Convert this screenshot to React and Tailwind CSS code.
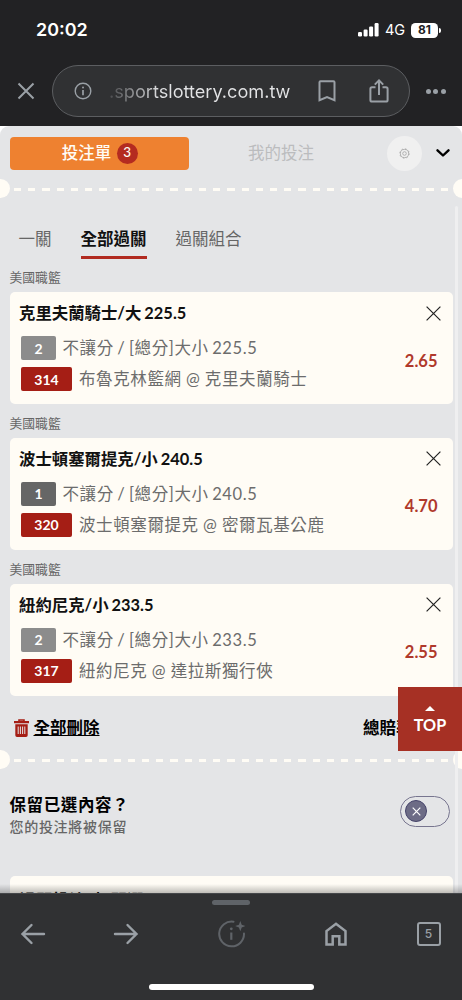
import React, { useState } from 'react';

const initialBets = [
  { id: 314, pick: '克里夫蘭騎士/大 225.5', side: 2, market: '不讓分 / [總分]大小 225.5', match: '布魯克林籃網 @ 克里夫蘭騎士', odds: '2.65' },
  { id: 320, pick: '波士頓塞爾提克/小 240.5', side: 1, market: '不讓分 / [總分]大小 240.5', match: '波士頓塞爾提克 @ 密爾瓦基公鹿', odds: '4.70' },
  { id: 317, pick: '紐約尼克/小 233.5', side: 2, market: '不讓分 / [總分]大小 233.5', match: '紐約尼克 @ 達拉斯獨行俠', odds: '2.55' },
];

const StatusBar = () => (
  <div className="flex h-[65px] items-start justify-between pl-9 pr-[21px] pt-[18px] text-white">
    <span className="h-6 text-[17.9px] font-semibold leading-6">20:02</span>
    <div className="flex h-6 items-center">
      <svg className="h-[14px] w-[21px]" viewBox="0 0 21 14" fill="currentColor">
        <rect x="0" y="9" width="4" height="4.5" rx="1.2" />
        <rect x="5.6" y="6.5" width="4" height="7" rx="1.2" />
        <rect x="11.1" y="3.5" width="4" height="10" rx="1.2" />
        <rect x="16.6" y="0" width="4" height="13.5" rx="1.2" />
      </svg>
      <span className="ml-[6px] w-[26px] whitespace-nowrap text-[14.5px] leading-6">4G</span>
      <span className="flex h-[15px] w-[27px] items-center justify-center rounded-[4.5px] bg-white text-[12px] font-bold leading-none text-[#222224]">81</span>
      <span className="ml-px h-[5px] w-[2px] rounded-r-full bg-white" />
    </div>
  </div>
);

const AddressBar = () => (
  <div className="flex h-[52px] items-center pl-[17px] text-[#9aa0a6]">
    <svg className="h-[18px] w-[18px]" viewBox="0 0 18 18" fill="none" stroke="currentColor" strokeWidth="2">
      <path d="M1.5 1.5l15 15M16.5 1.5l-15 15" />
    </svg>
    <div className="ml-[17px] flex h-[52px] w-[358px] items-center rounded-full border border-[#5c5e61] bg-[#303133]">
      <svg className="ml-[21px] h-[18px] w-[18px]" viewBox="0 0 18 18" fill="none" stroke="currentColor" strokeWidth="1.4">
        <circle cx="9" cy="9" r="7.8" />
        <path d="M9 8v5.2" strokeWidth="1.7" />
        <circle cx="9" cy="5.6" r="1" fill="currentColor" stroke="none" />
      </svg>
      <span className="ml-[17px] w-[183px] whitespace-nowrap bg-gradient-to-r from-[#4a4b4e] via-[#e3e4e6] via-[28%] to-[#e3e4e6] bg-clip-text text-[18.15px] leading-7 text-transparent">
        .sportslottery.com.tw
      </span>
      <svg className="ml-[26px] h-[22px] w-[18px]" viewBox="0 0 18 22" fill="none" stroke="currentColor" strokeWidth="2">
        <path d="M1.5 2.3q0-1 1-1h13q1 0 1 1v17.9L9 17l-7.5 3.2z" />
      </svg>
      <svg className="ml-[33px] h-6 w-5" viewBox="0 0 20 24" fill="none" stroke="currentColor" strokeWidth="2">
        <path d="M6.5 8.3H3q-1.6 0-1.6 1.6v11q0 1.6 1.6 1.6h14q1.6 0 1.6-1.6v-11q0-1.6-1.6-1.6h-3.5M10 16V2M5.8 5.6L10 1.4l4.2 4.2" />
      </svg>
    </div>
    <div className="ml-[16px] flex gap-[2.3px]">
      <span className="h-[5px] w-[5px] rounded-full bg-current" />
      <span className="h-[5px] w-[5px] rounded-full bg-current" />
      <span className="h-[5px] w-[5px] rounded-full bg-current" />
    </div>
  </div>
);

// Perforated ticket edge
const TicketDivider = () => (
  <div className="flex h-[19px] shrink-0 items-center overflow-hidden">
    <span className="-ml-[9.5px] h-[19px] w-[19px] shrink-0 rounded-full bg-[#fffcf5]" />
    <span className="ml-[4.5px] mt-[2px] h-[2.4px] flex-1 bg-[repeating-linear-gradient(90deg,#fffcf5_0_7.2px,transparent_7.2px_14.22px)]" />
    <span className="-mr-[9.5px] ml-[4px] h-[19px] w-[19px] shrink-0 rounded-full bg-[#fffcf5]" />
  </div>
);

const BetCard = ({ bet, onRemove }) => (
  <div className="h-[145.9px] shrink-0">
    <div className="flex h-[33.5px] items-center pt-[5px] text-[12.8px] leading-none text-[#666]">美國職籃</div>
    <div className="h-[112.4px] rounded-[5px] bg-[#fffcf5] pl-[9.5px] pr-[12px] pt-[9px]">
      <div className="flex h-[24px] items-center justify-between">
        <span className="whitespace-nowrap text-[16.4px] font-bold leading-6 text-[#111] [word-spacing:-1px]">{bet.pick}</span>
        <button onClick={() => onRemove(bet.id)}>
          <svg className="h-[15px] w-[15px]" viewBox="0 0 15 15" fill="none" stroke="#222" strokeWidth="1.2">
            <path d="M.6.6l13.8 13.8M14.4.6L.6 14.4" />
          </svg>
        </button>
      </div>
      <div className="flex items-center justify-between pt-[11px]">
        <div className="flex flex-col gap-[7px] pl-[2px] text-[16.5px] tracking-[0.6px] text-[#6c6c6c]">
          <div className="flex h-6 items-center">
            <span className={`flex h-6 w-[35px] items-center justify-center rounded-[2px] text-[14px] font-bold tracking-normal text-white ${bet.side === 1 ? 'bg-[#666]' : 'bg-[#8c8c8c]'}`}>{bet.side}</span>
            <span className="ml-[6.5px] whitespace-nowrap leading-6 [word-spacing:-1.3px]">{bet.market}</span>
          </div>
          <div className="flex h-6 items-center">
            <span className="flex h-6 w-[51px] items-center justify-center rounded-[2px] bg-[#a51e15] text-[14px] font-bold tracking-normal text-white">{bet.id}</span>
            <span className="ml-[7px] whitespace-nowrap leading-6 [word-spacing:-0.4px]">{bet.match}</span>
          </div>
        </div>
        <span className="mr-[3px] pb-[6px] text-[16.5px] font-bold leading-6 text-[#b0392b]">{bet.odds}</span>
      </div>
    </div>
  </div>
);

const SlipHeader = ({ count }) => (
  <div className="flex h-[53px] shrink-0 items-center pl-[9.5px] pt-[1px]">
    <div className="flex h-[33px] w-[179.5px] items-center justify-center rounded-[4px] bg-[#ee8130] pl-[1px] text-[16.5px] text-[#fffcf5]">
      <span className="font-medium">投注單</span>
      <span className="ml-[5.5px] flex h-[21px] w-[21px] items-center justify-center rounded-full bg-[#b42b20] text-[13.5px] font-medium leading-none">{count}</span>
    </div>
    <span className="ml-[59px] w-[70px] whitespace-nowrap text-[16.5px] text-[#bbbcbe]">我的投注</span>
    <span className="ml-[69px] flex h-[35px] w-[35px] items-center justify-center rounded-full bg-[#f0f0f0]">
      <svg className="h-[11px] w-[11px]" viewBox="0 0 11 11" fill="none" stroke="#aaa" strokeWidth=".9">
        <circle cx="5.5" cy="5.5" r="4.1" />
        <circle cx="5.5" cy="5.5" r="4.7" strokeDasharray="1.5 2.19" />
        <circle cx="5.5" cy="5.5" r="1.8" />
      </svg>
    </span>
    <svg className="ml-[14px] h-[10px] w-[14px]" viewBox="0 0 14 10" fill="none" stroke="#000" strokeWidth="2.4" strokeLinecap="round" strokeLinejoin="round">
      <path d="M1.5 2.3L7 7.5l5.5-5.2" />
    </svg>
  </div>
);

const BottomBar = () => (
  <div className="flex h-[107px] shrink-0 flex-col items-center border-t border-[#45474a] bg-[#303133] text-[#9aa0a6]">
    <span className="mt-[6px] h-[5px] w-[38px] rounded-full bg-[#5f6368]" />
    <div className="mt-[12px] flex h-[34px] w-full items-center pl-[20px]">
      <svg className="h-[22px] w-[26px]" viewBox="0 0 26 22" fill="none" stroke="currentColor" strokeWidth="2.4" strokeLinecap="round">
        <path d="M24 11H2.5M11.5 2L2.5 11l9 9" />
      </svg>
      <svg className="ml-[67px] h-[22px] w-[26px]" viewBox="0 0 26 22" fill="none" stroke="currentColor" strokeWidth="2.4" strokeLinecap="round">
        <path d="M2 11h21.5M14.5 2l9 9-9 9" />
      </svg>
      <svg className="ml-[79px] h-[28px] w-[28px]" viewBox="0 0 28 28" fill="none" stroke="#5f6368" strokeWidth="2">
        <path d="M15.5 1.7A12.4 12.4 0 1 0 26 13.5" strokeLinecap="round" />
        <path d="M13.3 12.5v7.3" strokeWidth="2.2" />
        <circle cx="13.3" cy="8.8" r="1.4" fill="#5f6368" stroke="none" />
        <path d="M22.3 1l1.4 3.7 3.7 1.4-3.7 1.4-1.4 3.7-1.4-3.7-3.7-1.4 3.7-1.4z" fill="#5f6368" stroke="none" />
      </svg>
      <svg className="ml-[78.5px] h-6 w-[22px]" viewBox="0 0 22 24" fill="none" stroke="currentColor" strokeWidth="2.5">
        <path d="M1.5 22.5V9L11 1.8 20.5 9v13.5h-6.2v-8.3H7.7v8.3z" />
      </svg>
      <span className="ml-[70px] flex h-6 w-6 items-center justify-center rounded-[3px] border-2 border-current text-[12px] font-medium leading-none">5</span>
    </div>
    <span className="mt-[33px] h-[6px] w-[165px] rounded-full bg-white" />
  </div>
);

export default function App() {
  const [bets, setBets] = useState(initialBets);
  const [keep, setKeep] = useState(false);

  const removeBet = (id) => {
    setBets(bets.filter(bet => bet.id !== id));
  };

  return (
    <div className="relative flex h-[1000px] w-[462px] flex-col overflow-hidden bg-[#222224] font-['Inter','Noto_Sans_CJK_TC',sans-serif]">
      <StatusBar />
      <AddressBar />
      <div className="mt-[9px] h-[767px] shrink-0 bg-white">
        <div className="relative flex h-full flex-col overflow-hidden rounded-t-[9px] bg-[#e4e5e7] font-['Lato','Noto_Sans_CJK_TC',sans-serif]">
          <SlipHeader count={bets.length} />
          <TicketDivider />

          {/* Scrollbar track */}
          <span className="absolute bottom-0 right-[4px] top-[80px] w-[3px] rounded-full bg-[#efeff0]" />

          <div className="mt-[24.5px] flex h-[36px] shrink-0 gap-[29px] pl-[18.5px] text-[16.5px] leading-[33px] text-[#666]">
            <span>一關</span>
            <span className="h-[36px] border-b-[3.5px] border-[#b12a20] font-bold leading-[33px] text-[#111]">全部過關</span>
            <span>過關組合</span>
          </div>

          <div className="flex shrink-0 flex-col px-[9.5px]">
            {bets.map(bet => (
              <BetCard key={bet.id} bet={bet} onRemove={removeBet} />
            ))}
          </div>

          <div className="flex h-[54px] shrink-0 items-center pl-[13.5px] pt-[10px] text-[16.5px] font-bold text-black">
            <svg className="h-[18px] w-[15px]" viewBox="0 0 15 18">
              <path d="M5 2V1h5v1" fill="none" stroke="#a51e15" strokeWidth="1.6" />
              <path d="M0 2h15v2.3H0zM1.3 5.3h12.4v11q0 1.7-1.7 1.7H3q-1.7 0-1.7-1.7z" fill="#a51e15" />
              <path d="M4.2 7.5V15M6.4 7.5V15M8.6 7.5V15M10.8 7.5V15" stroke="#e4e5e7" strokeWidth="1" />
            </svg>
            <button className="ml-[5px] underline decoration-1 underline-offset-1" onClick={() => setBets([])}>全部刪除</button>
            <span className="ml-[263.5px] whitespace-nowrap">總賠率</span>
          </div>
          <TicketDivider />

          <div className="mt-[21px] flex h-[50px] shrink-0 items-center justify-between pl-[9.5px] pr-[12px]">
            <div className="flex flex-col">
              <span className="text-[16.5px] font-bold leading-[24px] tracking-[0.6px] text-black">保留已選內容？</span>
              <span className="-mt-px text-[14px] font-medium leading-[21px] tracking-[0.7px] text-[#666]">您的投注將被保留</span>
            </div>
            <button
              className={`mb-[8px] flex h-[31px] w-[50px] items-center rounded-full border border-[#77758f] px-[4px] ${keep ? 'justify-end' : ''}`}
              onClick={() => setKeep(!keep)}
            >
              <span className="flex h-[22px] w-[22px] items-center justify-center rounded-full border border-[#45436a] bg-[#6d6c86]">
                <svg className="h-[9px] w-[9px]" viewBox="0 0 9 9" stroke="#fff" strokeWidth="1.2">
                  <path d="M.7.7l7.6 7.6M8.3.7L.7 8.3" />
                </svg>
              </span>
            </button>
          </div>

          <div className="mx-[9.5px] mt-[35.5px] h-[60px] shrink-0 rounded-[5px] bg-[#fffcf5] pl-[10px] pt-[13px] text-[16.5px] font-bold leading-6 text-[#111]">
            過關投注 (相關選)
          </div>
          <span className="absolute bottom-0 left-0 h-[9px] w-full bg-gradient-to-t from-black/25 to-transparent" />
        </div>
      </div>
      <BottomBar />

      {/* Back to top */}
      <button className="absolute right-0 top-[687px] flex h-[64px] w-[64px] flex-col items-center bg-[#a63024] font-['Lato',sans-serif] text-[16.2px] font-bold leading-[22px] text-white">
        <svg className="mb-[3px] mt-[19px] h-[5px] w-[10px] shrink-0" viewBox="0 0 10 5" fill="currentColor">
          <path d="M5 0l5 5H0z" />
        </svg>
        TOP
      </button>
    </div>
  );
}
